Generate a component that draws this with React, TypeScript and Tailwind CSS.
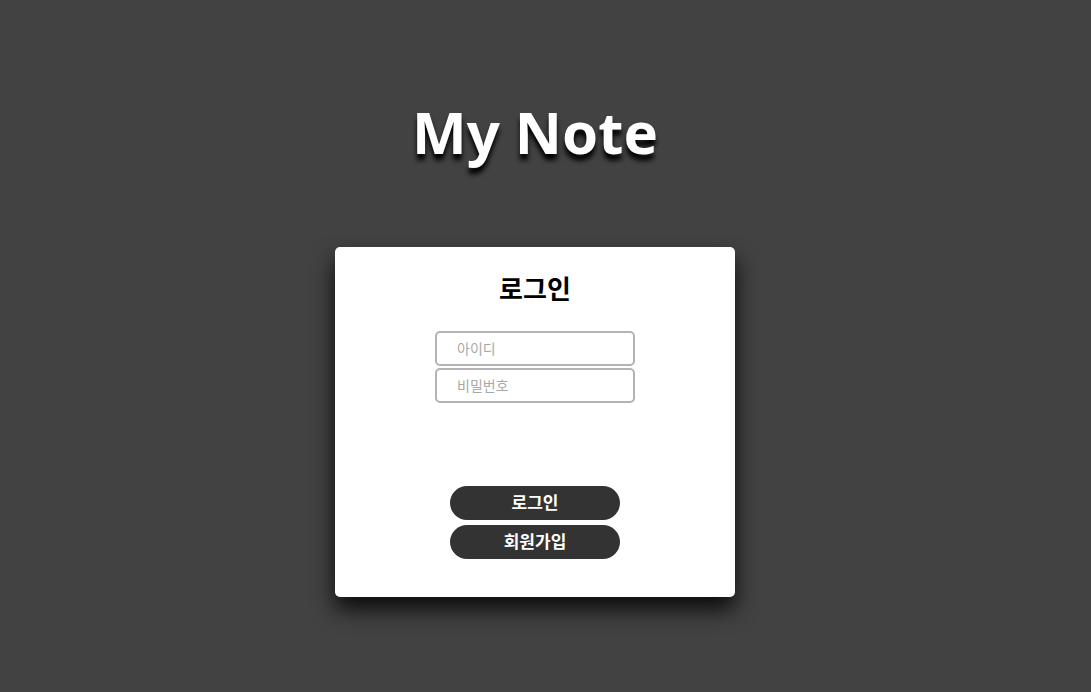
export default function App() {
  return (
    <div className="min-h-[692px] w-full bg-[#424242] flex flex-col items-center pr-[21px] font-['Noto_Sans','Noto_Sans_CJK_KR',sans-serif]">
      <h1 className="mt-[98px] text-[58px] font-bold leading-[68px] text-white [text-shadow:0_6px_5px_#000]">
        My Note
      </h1>
      <div className="mt-[81px] w-[400px] h-[350px] bg-white rounded-[5px] shadow-[0_12px_22px_rgba(0,0,0,0.85)] flex flex-col items-center pt-[25px]">
        <h2 className="text-[26px] font-bold leading-[34px] text-black">로그인</h2>
        <div className="mt-[25px] flex flex-col gap-[2px]">
          <input
            placeholder="아이디"
            className="w-[200px] h-[35px] border-2 border-[#b3b3b3] rounded-[5px] pl-[20px] text-[14px] outline-none placeholder:text-[#a8a8a8]"
          />
          <input
            type="password"
            placeholder="비밀번호"
            className="w-[200px] h-[35px] border-2 border-[#b3b3b3] rounded-[5px] pl-[20px] text-[14px] outline-none placeholder:text-[#a8a8a8]"
          />
        </div>
        <div className="mt-[83px] flex flex-col gap-[5px]">
          <button className="w-[170px] h-[34px] rounded-full bg-[#333333] text-white text-[17px] font-bold">
            로그인
          </button>
          <button className="w-[170px] h-[34px] rounded-full bg-[#333333] text-white text-[17px] font-bold">
            회원가입
          </button>
        </div>
      </div>
    </div>
  );
}
